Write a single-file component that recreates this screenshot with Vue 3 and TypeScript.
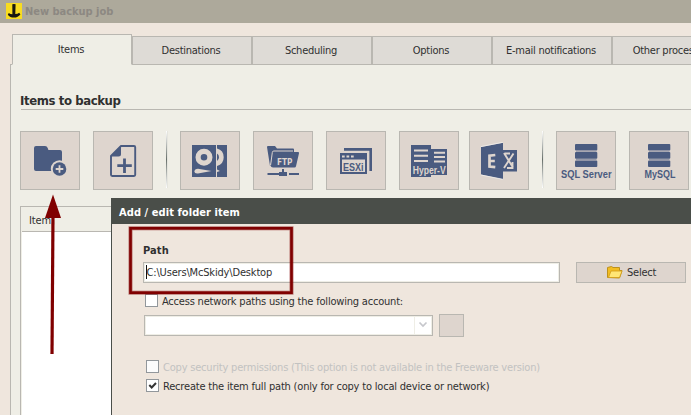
<script setup lang="ts">
interface Tab {
  label: string
  cls: string
}

const tabs: Tab[] = [
  { label: 'Items', cls: 'active' },
  { label: 'Destinations', cls: '' },
  { label: 'Scheduling', cls: '' },
  { label: 'Options', cls: '' },
  { label: 'E-mail notifications', cls: '' },
  { label: 'Other processes', cls: '' },
]
const databases: string[] = ['SQL Server', 'MySQL']
</script>

<template>
  <div class="window">
    <header class="titlebar">
      <svg class="logo" viewBox="0 0 16 16">
        <rect width="16" height="16" fill="#f8dc20" />
        <path d="M6.3 1.300q1.600-.7 3.300 0L9.300 11q2.400 0 3.900-1.300l1.200 1.800Q12 14.600 8 14.600T1.800 11.700l1-1.700q1.500 1.200 3.600 1.200z" fill="#171711" />
      </svg>
      <span class="title">New backup job</span>
    </header>

    <nav class="tabs">
      <button v-for="tab in tabs" :key="tab.label" class="tab" :class="tab.cls"><span>{{ tab.label }}</span></button>
    </nav>

    <main class="page">
      <h1 class="heading"><span>Items to backup</span></h1>
      <div class="toolbar">
        <button class="tool">
          <svg viewBox="0 0 60 59">
            <path d="M14 17q0-2 2-2h9q2 0 2.700 2l.7 2H40q2 0 2 2v19H16q-2 0-2-2z" fill="#4a5b80" />
            <circle cx="39.500" cy="38" r="8.700" fill="#ded5ce" />
            <circle cx="39.500" cy="38" r="6.800" fill="#4a5b80" />
            <path d="M39.500 34.200v7.600M35.700 38h7.600" stroke="#ded5ce" stroke-width="1.800" />
          </svg>
        </button>
        <button class="tool">
          <svg viewBox="0 0 60 59">
            <path d="M28 15h13q1.200 0 1.200 1.200v27.600q0 1.200-1.200 1.200H19.200q-1.200 0-1.200-1.200V25z" fill="none" stroke="#4a5b80" stroke-width="1.900" stroke-linejoin="round" />
            <path d="M28 14.500V23q0 2.500-2.500 2.500H18z" fill="#4a5b80" />
            <path d="M31.500 27.500V42M24.300 34.700h14.500" stroke="#4a5b80" stroke-width="2.800" />
          </svg>
        </button>
        <i class="separator"></i>
        <button class="tool">
          <svg viewBox="0 0 60 59">
            <path d="M12 14h24v32H12zM37 14h10v32H37z" fill="#4a5b80" />
            <circle cx="24" cy="26.200" r="5.900" fill="none" stroke="#ded5ce" stroke-width="5.200" />
            <path d="M37 17.500q6.700 1.800 6.700 8.700T37 35v-5q2-1.200 2-3.800T37 22.500zM37 38.500l3 1.500-3 1z" fill="#ded5ce" />
            <path d="M31.500 40 18 42.500q-3.500.4-3.500-2.200t3.500-2.600z" fill="#ded5ce" />
          </svg>
        </button>
        <button class="tool">
          <svg viewBox="0 0 60 59">
            <path d="M14 16q0-1 1-1h7l2 2.500h16q1 0 1 1V21H21l-4 14z" fill="#4a5b80" />
            <path d="M20 21h25q1.300 0 1 1.200l-3 13Q42.700 36.500 41.500 36.500H20q-2 0-2.500-2z" fill="#4a5b80" />
            <path d="m17.600 34 1.700-12.500q.1-1.500 1.500-1.500H40" fill="none" stroke="#ded5ce" />
            <path d="M14.500 43H26M36 43h10" stroke="#4a5b80" stroke-width="2" />
            <path d="M29 38h2v3h3v4h-8v-4h3z" fill="#4a5b80" />
            <text x="24" y="33.500" class="icon-text ftp" textLength="15.500" lengthAdjust="spacingAndGlyphs">FTP</text>
          </svg>
        </button>
        <button class="tool">
          <svg viewBox="0 0 60 59">
            <path d="M18 17h28v23h-2.600V19.700H18z" fill="#4a5b80" />
            <path d="M14 22h27v21H14z" fill="#4a5b80" />
            <path d="M16 28.500h23V41H16z" fill="#ded5ce" />
            <path d="M16 25.500h2.700M20.500 25.500h2.700M25 25.500h2.700" stroke="#ded5ce" stroke-width="2" />
            <text x="17" y="40" class="icon-text esxi" textLength="20.500" lengthAdjust="spacingAndGlyphs">ESXi</text>
          </svg>
        </button>
        <button class="tool">
          <svg viewBox="0 0 60 59">
            <path d="M12 14h20v4h16v26H32v2H12z" fill="#4a5b80" />
            <path d="M15 19.500h14M15 24.700h14M15 30h14M35 21.700h11M35 26h11M35 30.500h11" stroke="#ded5ce" stroke-width="2" />
            <text x="13.700" y="42.500" class="icon-text hyper" textLength="33" lengthAdjust="spacingAndGlyphs">Hyper-V</text>
          </svg>
        </button>
        <button class="tool exchange">
          <svg viewBox="0 0 60 59">
            <path d="M34 19h14v21.500H34z" fill="#4a5b80" />
            <path d="m35 22 9 14.500M44.500 22.500 35 37M36 22.500h5M43.500 31v6H38" fill="none" stroke="#ded5ce" stroke-width="1.900" />
            <path d="m12 16 22-4.300v36.500L12 43.500z" fill="#4a5b80" />
            <path d="m12 15.600 22-4.300M12 44l22 4.300" stroke="#f4f1ed" stroke-width=".8" />
            <path d="M26.300 24l-5.800.6v11l5.800.6M20.500 30H25.800" fill="none" stroke="#ded5ce" stroke-width="2.700" />
          </svg>
        </button>
        <i class="separator"></i>
        <button v-for="db in databases" :key="db" class="tool">
          <svg viewBox="0 0 60 59">
            <g fill="#4a5b80">
              <rect x="19" y="13" width="22.300" height="6.500" rx="1" />
              <rect x="19" y="21" width="22.300" height="6.700" rx="1" />
              <rect x="19" y="29.500" width="22.300" height="6.500" rx="1" />
            </g>
            <path d="M20 20.200h20.500M20 28.600h20.500" stroke="#8f93a4" />
            <text :x="db === 'MySQL' ? 31 : 30.300" y="47.300" text-anchor="middle" class="icon-text db" :textLength="db === 'MySQL' ? 31 : 50.500" lengthAdjust="spacingAndGlyphs">{{ db }}</text>
          </svg>
        </button>
      </div>
      <section class="list"><div class="list-head"><span>Item</span></div></section>
    </main>

    <section class="dialog">
      <header class="dialog-title"><span>Add / edit folder item</span></header>
      <div class="form">
        <h2 class="path-label"><span>Path</span></h2>
        <div class="path-row">
          <div class="input"><i class="caret"></i><span class="path">C:\Users\McSkidy\Desktop</span></div>
          <button class="select">
            <svg viewBox="0 0 16 13">
              <path d="M.5 11.500v-10L4.500.5l1.500 1h6.500v3H15l-2.500 7.500z" fill="#f2bd22" stroke="#bd911d" />
              <path d="M4 5h11l-2.500 6.500h-11z" fill="#ffe675" stroke="#d19b18" stroke-width=".8" />
            </svg>
            <span>Select</span>
          </button>
        </div>
        <div class="check access"><i class="box"></i><span>Access network paths using the following account:</span></div>
        <div class="account-row">
          <div class="combo"><div class="combo-value"></div><svg viewBox="0 0 16 18"><path d="m4.500 6.500 3.500 3.500 3.500-3.500" fill="none" stroke="#c6c7cc" stroke-width="1.700" /></svg></div>
          <button class="browse"></button>
        </div>
        <div class="check copy"><i class="box"></i><span>Copy security permissions (This option is not available in the Freeware version)</span></div>
        <div class="check recreate">
          <i class="box"><svg viewBox="0 0 11 11"><path d="M2.300 5 4.700 7.500 9 3" fill="none" stroke="#333" stroke-width="2" /></svg></i>
          <span>Recreate the item full path (only for copy to local device or network)</span>
        </div>
      </div>
    </section>

    <svg class="marks" viewBox="0 0 691 415">
      <g fill="none" stroke="#800000">
        <rect x="130.500" y="228.300" width="161" height="64.400" stroke-width="4" opacity=".5" />
        <rect x="130.500" y="228.300" width="161" height="64.400" stroke-width="2.600" />
        <path d="M53 215 52 354" stroke-width="3.200" />
      </g>
      <path d="M53 194.500 61 218H45z" fill="#800000" />
    </svg>
  </div>
</template>

<style>
body { margin: 0; }
</style>

<style scoped>
* { box-sizing: border-box; }
button { padding: 0; margin: 0; font: inherit; color: inherit; border-radius: 0; }
span { white-space: nowrap; }
.window { position: relative; width: 691px; height: 415px; overflow: hidden; background: #efe6dd; color: #303030; font: 11px/14px "DejaVu Sans Condensed", "DejaVu Sans", sans-serif; font-stretch: condensed; display: flex; flex-direction: column; }
.titlebar { flex: none; height: 23px; background: #ada99b; display: flex; padding: 3px 0 0 6px; gap: 3px; }
.logo { width: 16px; height: 16px; }
.title { font-weight: bold; color: #8c8882; line-height: 18px; letter-spacing: -.03px; }
.tabs { flex: none; width: 740px; height: 42px; padding: 11px 0 0 12px; display: flex; align-items: flex-end; position: relative; z-index: 1; }
.tab { width: 120px; height: 29px; flex: none; border: 1px solid #b9b7b1; background: #dedbd6; line-height: 27px; letter-spacing: -.25px; padding-right: 2px; }
.tab.active { height: 31px; background: #efeee6; border-bottom-color: #efeee6; }
.page { flex: none; width: 690px; height: 351px; margin: -1px 0 0 10px; border: solid #b9b7b1; border-width: 1px 0 0 1px; background: #efeee6; padding: 28px 0 0 9px; }
.heading { margin: 0 0 0 1px; height: 17px; border-bottom: 1px solid #b9b7b1; font-size: 13px; line-height: 16px; font-weight: bold; }
.heading span { margin-left: -1px; letter-spacing: -.4px; }
.toolbar { height: 59px; margin-top: 21px; display: flex; gap: 13px; }
.tool { flex: none; width: 60px; height: 59px; border: 1px solid #b9b7b1; background: #ded5ce; }
.tool svg { display: block; width: 60px; height: 59px; margin: -1px; }
.tool.exchange { margin-left: -3px; }
.separator { width: 1px; height: 57px; background: linear-gradient(#fff, #68706b 50%, #fff); box-shadow: 1px 0 #e5e5de; }
.icon-text { font-family: "Liberation Sans", sans-serif; font-weight: bold; }
.ftp { fill: #ded5ce; font: bold 9px "DejaVu Sans Condensed", sans-serif; }
.esxi { fill: #4a5b80; font-size: 11px; }
.hyper { fill: #ded5ce; font-size: 11px; }
.db { fill: #4a5b80; font-size: 11px; }
.list { height: 220px; margin-top: 16px; border: solid #b9b7b1; border-width: 1px 0 0 1px; padding-left: 1px; background: linear-gradient(90deg, #efeee6 1px, #fff 1px); }
.list-head { height: 25px; background: #efeee6; border-bottom: 1px solid #b9b7b1; padding: 7px 0 0 7px; letter-spacing: -.1px; }
.dialog { position: absolute; left: 111px; top: 198px; width: 580px; height: 217px; background: #efe6dd; border-left: 1px solid #4a4e49; }
.dialog-title { height: 26px; background: #4a4e49; color: #fff; font-weight: bold; line-height: 29px; padding-left: 7px; letter-spacing: .07px; }
.form { padding: 19px 0 0 31px; display: flex; flex-direction: column; }
.path-label { margin: 0; height: 19px; font-size: 11px; line-height: 16px; letter-spacing: .1px; }
.path-row { display: flex; gap: 16px; }
.input { width: 417px; height: 21px; background: #fff; border: 1px solid #b9b7b1; box-shadow: inset 0 0 0 1px #efeee6; padding: 2px 0 0 1px; display: flex; line-height: 16px; }
.caret { width: 1px; height: 14px; background: #111; margin-left: 1px; }
.path { letter-spacing: -.17px; margin-left: -.5px; }
.select { width: 110px; height: 21px; border: 1px solid #b9b7b1; background: #ded5ce; display: flex; align-items: center; gap: 4px; padding-left: 30px; letter-spacing: -.25px; }
.select svg { width: 16px; height: 13px; }
.check { height: 13px; display: flex; gap: 4px; line-height: 16px; letter-spacing: -.2px; }
.box { width: 13px; height: 13px; flex: none; background: #fff; border: 1px solid #92979b; }
.box svg { display: block; width: 11px; height: 11px; }
.access { margin: 11px 0 0 2px; }
.account-row { display: flex; align-items: center; gap: 6px; margin: 7px 0 0 1px; height: 23px; }
.combo { width: 289px; height: 21px; border: 1px solid #b9b7b1; background: #fff; box-shadow: inset 0 0 0 1px #efeee6; display: flex; }
.combo-value { width: 270px; border-right: 1px solid #efeee6; }
.combo svg { width: 16px; height: 18px; }
.browse { width: 25px; height: 23px; border: 1px solid #b9b7b1; background: #ded5ce; }
.copy { margin: 23px 0 0 3px; color: #c2c2c1; }
.copy .box { background: #fcfcfc; }
.recreate { margin: 6px 0 0 3px; letter-spacing: -.19px; }
.marks { position: absolute; z-index: 3; left: 0; top: 0; width: 691px; height: 415px; pointer-events: none; }
</style>
